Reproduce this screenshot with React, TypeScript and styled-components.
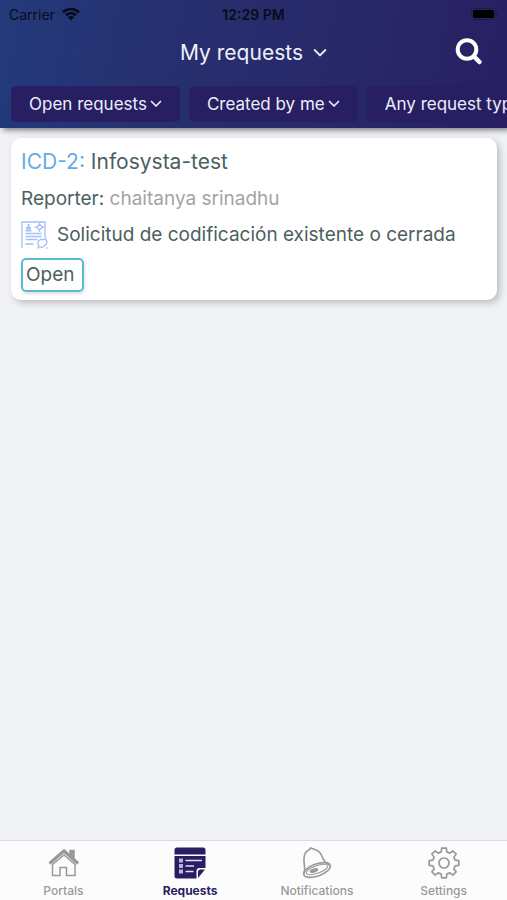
import React from "react";
import styled, { createGlobalStyle } from "styled-components";

const GlobalStyle = createGlobalStyle`
  * { box-sizing: border-box; }
  body {
    margin: 0;
    background: #f0f2f5;
    font-family: Inter, "Liberation Sans", sans-serif;
  }
  button { font: inherit; color: inherit; border: 0; background: none; padding: 0; cursor: pointer; }
`;

const Page = styled.div`
  display: flex;
  flex-direction: column;
  min-height: 100vh;
  overflow-x: hidden;
`;

const Header = styled.header`
  flex: none;
  padding-bottom: 6px;
  background: linear-gradient(100deg, #233a7a 0%, #272f6f 35%, #282868 70%, #281f62 100%);
  box-shadow: 3px 2px 6px rgba(0, 0, 0, 0.5);
`;

const StatusBar = styled.div`
  display: grid;
  grid-template-columns: 1fr auto 1fr;
  align-items: center;
  height: 28px;
  padding: 0 9px;
  color: #080a18;
  font-size: 14px;
`;

const Carrier = styled.span`
  display: flex;
  align-items: center;
  gap: 7px;
`;

const Clock = styled.time`
  font-weight: 600;
`;

const Battery = styled.svg`
  justify-self: end;
`;

const TitleBar = styled.div`
  display: grid;
  grid-template-columns: 1fr auto 1fr;
  align-items: center;
  height: 48px;
  padding: 0 24px;
`;

const TitleButton = styled.button`
  grid-column: 2;
  display: flex;
  align-items: center;
  gap: 10px;
  padding-top: 2px;
  color: #eef0fb;
  font-size: 21px;
  line-height: 28px;
`;

const SearchButton = styled.button`
  justify-self: end;
  display: flex;
  color: #fff;
`;

const Filters = styled.div`
  display: flex;
  gap: 9px;
  margin-top: 10px;
  padding-left: 11px;
  overflow-x: auto;
  scrollbar-width: none;
`;

const FilterButton = styled.button`
  flex: none;
  display: flex;
  align-items: center;
  gap: 3px;
  height: 36px;
  padding: 0 18px;
  border-radius: 5px;
  background: #281f62;
  color: #eceefa;
  font-size: 17px;
  white-space: nowrap;
`;

const List = styled.main`
  flex: 1;
  padding: 10px 10px 20px 11px;
`;

const Card = styled.article`
  display: flex;
  flex-direction: column;
  align-items: flex-start;
  padding: 6px 10px 8px;
  border-radius: 10px;
  background: #fff;
  box-shadow: 3px 3px 7px rgba(0, 0, 0, 0.22);
  color: #4c5f60;
`;

const CardTitle = styled.h2`
  margin: 0;
  font-size: 21px;
  font-weight: 400;
  line-height: 36px;
`;

const IssueKey = styled.a`
  color: #66aae6;
  text-decoration: none;
`;

const CardRow = styled.p`
  display: flex;
  align-items: center;
  gap: 9px;
  margin: 0;
  font-size: 19px;
  line-height: 36px;
`;

const Reporter = styled.p`
  margin: 1px 0 0;
  font-size: 19px;
  line-height: 36px;
`;

const ReporterName = styled.span`
  color: #a3a3a3;
`;

const Status = styled.span`
  margin-top: 5px;
  padding: 0 8px 0 3px;
  border: 2px solid #56bcd6;
  border-radius: 5px;
  box-shadow: 1px 2px 3px rgba(0, 0, 0, 0.12);
  font-size: 19px;
  line-height: 30px;
`;

const TabBar = styled.nav`
  flex: none;
  display: grid;
  grid-template-columns: repeat(4, 1fr);
  height: 60px;
  border-top: 1px solid #d9dadc;
  background: #fcfcfd;
`;

const Tab = styled.button<{ $active?: boolean }>`
  display: flex;
  flex-direction: column;
  align-items: center;
  justify-content: flex-end;
  gap: 4px;
  padding-bottom: 1px;
  color: ${(p) => (p.$active ? "#281f62" : "#999")};
  font-size: 12px;
  font-weight: ${(p) => (p.$active ? 700 : 500)};
  line-height: 16px;
`;

const Chevron = ({ size }: { size: number }) => (
  <svg width={size} height={size} viewBox="0 0 12 12" fill="none" stroke="currentColor" strokeWidth="1.7" strokeLinecap="round" strokeLinejoin="round" aria-hidden>
    <path d="M1.500 3.500 6 8 10.500 3.500" />
  </svg>
);

const WifiIcon = () => (
  <svg width="18" height="14" viewBox="0 0 18 14" fill="none" stroke="currentColor" strokeWidth="2.6" aria-hidden>
    <path d="M1 5.2C5.500.9 12.500.9 17 5.2M4 8.300c2.900-2.600 7.100-2.600 10 0" />
    <path d="M5.900 10.200c1.800-1.500 4.400-1.500 6.200 0L9 13.600Z" fill="currentColor" stroke="none" />
  </svg>
);

const SearchIcon = () => (
  <svg width="28" height="28" viewBox="0 0 28 28" fill="none" stroke="currentColor" aria-hidden>
    <circle cx="12" cy="11.500" r="9.300" strokeWidth="4" />
    <path d="m19 18.500 5.500 5.500" strokeWidth="4.500" strokeLinecap="round" />
  </svg>
);

const DocumentIcon = () => (
  <svg width="27" height="28" viewBox="0 0 27 28" fill="none" stroke="#a3bff8" strokeWidth="1.300" aria-hidden>
    <path d="M1 27V1h23v16" />
    <path d="M7.500 3v5M5 7h5M4.500 9.500h6" strokeWidth="1.800" />
    <path d="m18.500 3.200 3 3-3 3-3-3ZM18.500 1.500v2M18.500 9v2M13.500 6.200h2M21.500 6.200h2" />
    <path d="M4.500 12.500h16M4.500 15.500h16M4.500 18.500h12M4.500 23h8" />
    <path d="m17 20.500 2.500-2h3l2.500-.500 1 3.500-2 3-3 2-3-1-1-2.500ZM18 25.500l-1.500 2M25 27h1.500" />
  </svg>
);

const HomeIcon = () => (
  <svg width="32" height="32" viewBox="0 0 32 32" fill="none" stroke="currentColor" aria-hidden>
    <path d="M23 8V3.500h4V14" fill="currentColor" strokeWidth="1.500" />
    <path d="M2.500 16.500 17 4l14 12.500" strokeWidth="3.200" />
    <path d="M5.500 17.500V28.500h7.500v-8h6.500v8H28V17.500L17 8Z" strokeWidth="1.500" />
  </svg>
);

const RequestsIcon = () => (
  <svg width="32" height="32" viewBox="0 0 32 32" aria-hidden>
    <path d="M3 .500h26q2.500 0 2.500 2.500v4.500H.500V3Q.500.500 3 .500ZM.500 9h31v12h-6q-3 0-3 3v7.500H3q-2.500 0-2.500-2.500ZM24 31v-6q0-2.500 2.500-2.500H31Z" fill="#281f62" />
    <g fill="#b9b7db">
      <rect x="5" y="11.500" width="4" height="4" />
      <rect x="5" y="17" width="4" height="4" />
      <rect x="5" y="22.500" width="4" height="4" />
    </g>
    <path d="M11.500 13.500H28M11.500 19H20M11.500 24.500h8" stroke="#e2e1f1" strokeWidth="1.500" />
  </svg>
);

const BellIcon = () => (
  <svg width="32" height="32" viewBox="0 0 32 32" fill="none" stroke="currentColor" strokeWidth="1.600" aria-hidden>
    <path d="M3 26.500C5 21.500 2.500 18 3 11.500 3.200 7 5.500 4 8 3l1.700-2 4 1.500C18 3.500 20 6 21.500 10.500c1.500 4.500 4 5.500 7 7.500" />
    <ellipse cx="16" cy="23" rx="14" ry="6" transform="rotate(-20 16 23)" />
    <ellipse cx="16" cy="22.500" rx="11.500" ry="3.800" transform="rotate(-20 16 22.500)" strokeWidth="1" />
    <ellipse cx="13" cy="23.500" rx="4.500" ry="2" transform="rotate(-20 13 23.500)" fill="currentColor" stroke="none" />
  </svg>
);

const gearTeeth = Array.from({ length: 8 }, (_, i) =>
  [
    [-14, 11.500],
    [-9, 15],
    [9, 15],
    [14, 11.500],
  ].map(([offset, radius]) => {
    const angle = ((i * 45 + offset) * Math.PI) / 180;
    return `${16 + radius * Math.sin(angle)},${16 - radius * Math.cos(angle)}`;
  }).join(" ")
).join(" ");

const GearIcon = () => (
  <svg width="32" height="32" viewBox="0 0 32 32" fill="none" stroke="currentColor" strokeWidth="1.700" strokeLinejoin="round" aria-hidden>
    <polygon points={gearTeeth} />
    <circle cx="16" cy="16" r="5" />
  </svg>
);

const filters = ["Open requests", "Created by me", "Any request type"];

const tabs = [
  { label: "Portals", Icon: HomeIcon },
  { label: "Requests", Icon: RequestsIcon, active: true },
  { label: "Notifications", Icon: BellIcon },
  { label: "Settings", Icon: GearIcon },
];

export default function App() {
  return (
    <Page>
      <GlobalStyle />
      <Header>
        <StatusBar>
          <Carrier>Carrier <WifiIcon /></Carrier>
          <Clock>12:29 PM</Clock>
          <Battery width="27" height="12" viewBox="0 0 27 12" aria-label="Battery">
            <rect x=".500" y=".500" width="24" height="11" rx="3" fill="none" stroke="#1c1a4a" />
            <rect x="2" y="2" width="21" height="8" rx="1.500" fill="#000" />
            <path d="M26 4v4" stroke="#1c1a4a" />
          </Battery>
        </StatusBar>
        <TitleBar>
          <TitleButton type="button">My requests <Chevron size={14} /></TitleButton>
          <SearchButton type="button" aria-label="Search"><SearchIcon /></SearchButton>
        </TitleBar>
        <Filters>
          {filters.map((label) => (
            <FilterButton type="button" key={label}>{label} <Chevron size={12} /></FilterButton>
          ))}
        </Filters>
      </Header>
      <List>
        <Card>
          <CardTitle><IssueKey href="#ICD-2">ICD-2:</IssueKey> Infosysta-test</CardTitle>
          <Reporter>Reporter: <ReporterName>chaitanya srinadhu</ReporterName></Reporter>
          <CardRow><DocumentIcon />Solicitud de codificación existente o cerrada</CardRow>
          <Status>Open</Status>
        </Card>
      </List>
      <TabBar>
        {tabs.map(({ label, Icon, active }) => (
          <Tab type="button" key={label} $active={active} aria-current={active ? "page" : undefined}>
            <Icon />
            {label}
          </Tab>
        ))}
      </TabBar>
    </Page>
  );
}
